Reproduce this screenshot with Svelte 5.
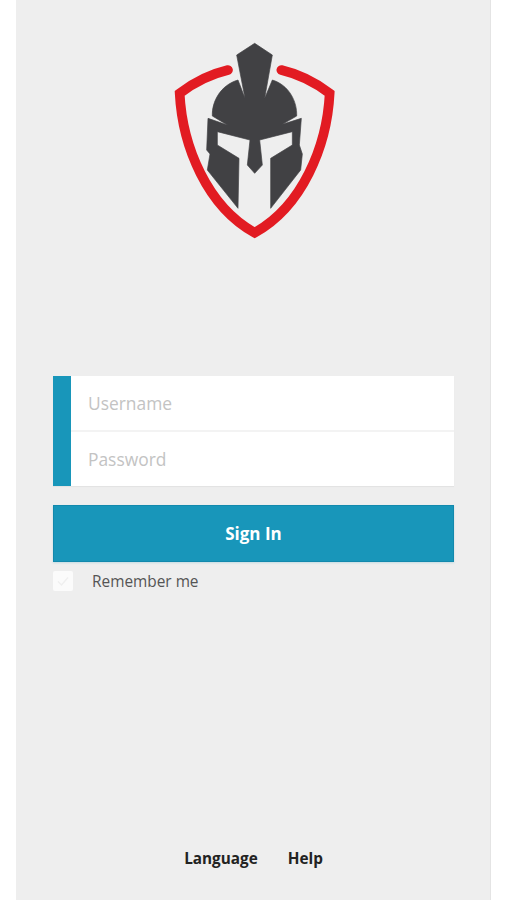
<script>
  let username = '';
  let password = '';
  let remember = true;
</script>

<div class="screen">
  <svg class="logo" width="210" height="220" viewBox="-5 0 630 660" aria-hidden="true">
    <path class="shield" d="M232 120 Q155 138 87 190 C95 350 170 530 312 608 C454 530 529 350 537 190 Q469 138 392 120" />
    <path class="helmet" d="M312 40 L365 75 L342 205 L365 150 C415 165 440 215 438 258 L395 283 L452 265 L446 345 L455 372 L450 420 L360 535 L360 385 L425 345 L425 305 L327 330 L335 405 L312 430 L290 405 L298 330 L200 305 L200 345 L265 385 L262 535 L170 420 L178 372 L168 360 L172 265 L230 285 L185 258 C183 215 210 165 262 150 L283 205 L258 75 Z" />
  </svg>

  <div class="fields">
    <div class="accent"></div>
    <div class="inputs">
      <input type="text" placeholder="Username" bind:value={username} />
      <input type="password" placeholder="Password" bind:value={password} />
    </div>
  </div>

  <button class="signin">Sign In</button>

  <label class="remember">
    <input type="checkbox" bind:checked={remember} />
    <span class="box">
      <svg width="14" height="14" viewBox="0 0 14 14" fill="none" stroke="#efefef" stroke-width="1.4">
        <polyline points="2,7.5 5.5,11 12,3.5" />
      </svg>
    </span>
    <span class="remember-text">Remember me</span>
  </label>

  <div class="footer">
    <span>Language</span>
    <span>Help</span>
  </div>
</div>

<style>
  :global(body) {
    background: #fff;
    font-family: "Open Sans", sans-serif;
  }

  .screen {
    box-sizing: border-box;
    width: 475px;
    height: 900px;
    margin-left: 16px;
    padding: 30px 36px 0 37px;
    background: #eee;
    border-right: 1px solid #e4e4e4;
    display: flex;
    flex-direction: column;
  }

  .logo {
    display: block;
    align-self: center;
    flex: none;
  }

  .shield {
    fill: none;
    stroke: #e21b22;
    stroke-width: 29;
    stroke-linejoin: miter;
    stroke-linecap: round;
  }

  .helmet {
    fill: #414144;
    stroke: #414144;
    stroke-width: 2;
    stroke-linejoin: round;
  }

  .fields {
    display: flex;
    height: 110px;
    margin-top: 126px;
    flex: none;
    box-shadow: 0 1px 1px #e3e3e3;
  }

  .accent {
    width: 18px;
    background: #1896ba;
  }

  .inputs {
    flex: 1;
    display: flex;
    flex-direction: column;
    background: #fff;
  }

  .inputs input {
    box-sizing: border-box;
    flex: 1 1 0;
    min-width: 0;
    min-height: 0;
    border: none;
    outline: none;
    background: #fff;
    padding: 0 0 0 17px;
    font-family: inherit;
    font-size: 17.4px;
    color: #444;
  }

  .inputs input:first-child {
    border-bottom: 2px solid #f3f3f3;
  }

  .inputs input::placeholder {
    color: #c3c3c3;
    opacity: 1;
  }

  .signin {
    display: block;
    flex: none;
    height: 57px;
    margin-top: 19px;
    border: 1px solid #1289ad;
    background: #1896ba;
    box-shadow: 0 1px 2px #c4dbe2;
    color: #fff;
    font-family: inherit;
    font-size: 17px;
    font-weight: 700;
    cursor: pointer;
  }

  .remember {
    display: flex;
    align-items: center;
    margin-top: 9px;
    height: 20px;
    font-size: 15.4px;
    color: #555;
  }

  .remember input {
    display: none;
  }

  .box {
    box-sizing: border-box;
    width: 20px;
    height: 20px;
    border-radius: 2px;
    background: #fbfbfb;
    display: flex;
    align-items: center;
    justify-content: center;
  }

  .remember-text {
    margin-left: 19px;
  }

  .footer {
    margin-top: auto;
    margin-bottom: 32px;
    display: flex;
    justify-content: center;
    gap: 30px;
    font-size: 15.3px;
    font-weight: 700;
    color: #222;
    line-height: 20px;
  }
</style>
